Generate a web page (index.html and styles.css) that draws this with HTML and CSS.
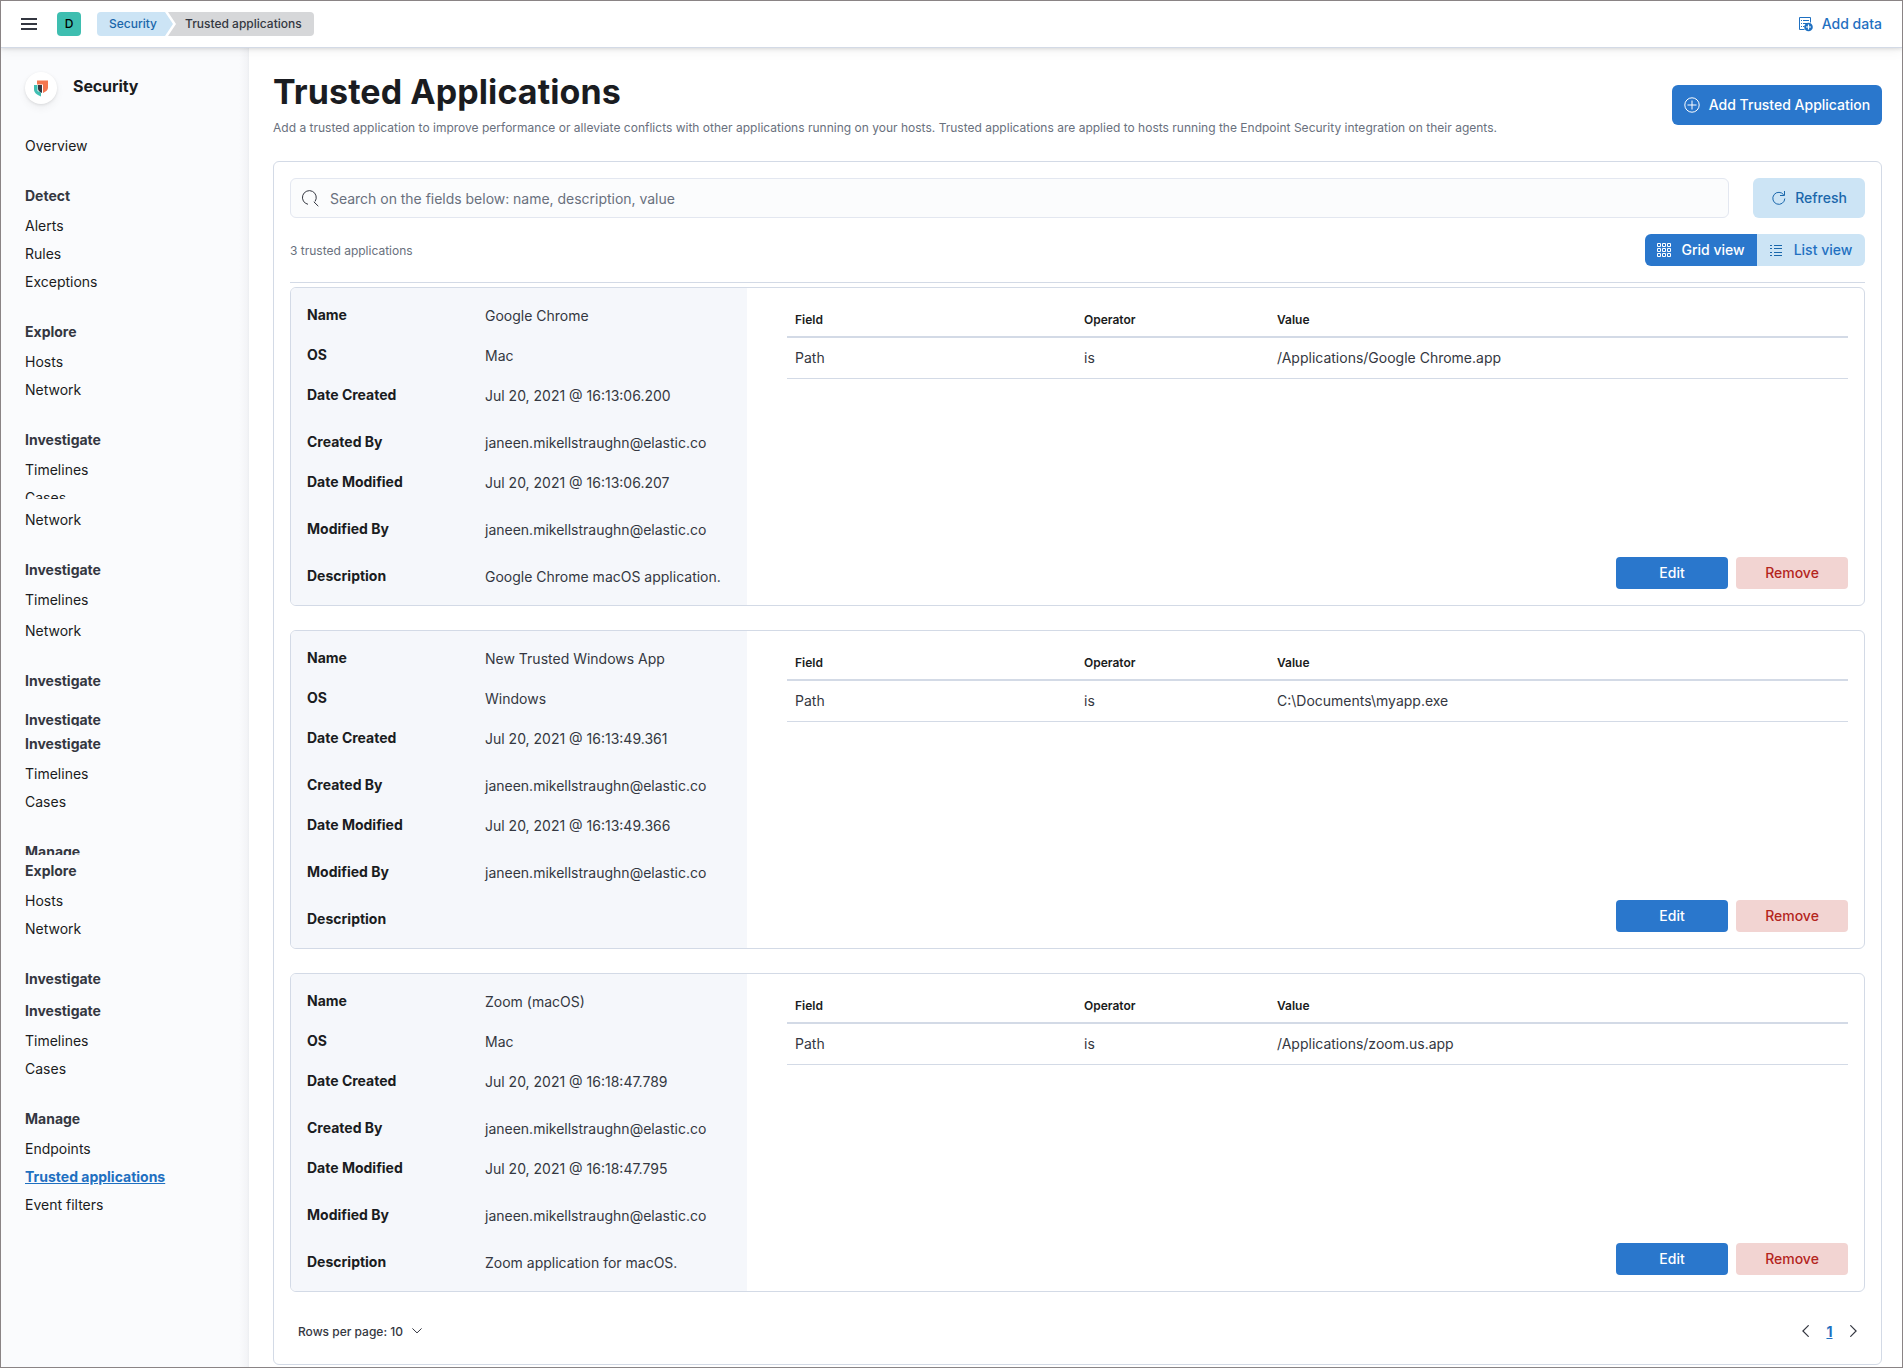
FILE: index.html
```html
<!DOCTYPE html>
<html lang="en">
<head>
<meta charset="utf-8">
<title>Trusted applications - Security</title>
<link rel="stylesheet" href="styles.css">
</head>
<body>
<div class="app">
  <header class="topbar">
    <button class="menu" aria-label="Menu"><svg width="16" height="12" viewBox="0 0 16 12"><path fill="#343741" d="M0 0h16v2H0zM0 5h16v2H0zM0 10h16v2H0z"/></svg></button>
    <span class="avatar">D</span>
    <nav class="crumbs">
      <a class="crumb crumb-link">Security</a>
      <span class="crumb crumb-current">Trusted applications</span>
    </nav>
    <a class="add-data">
      <svg width="15" height="15" viewBox="0 0 15 15"><path fill="none" stroke="#1f70c1" d="M6.500 12.500h-5v-12h11v5"/><path stroke="#1f70c1" d="M3 3.500h1M5 3.500h6M3 6.500h1M5 6.500h4M3 9.500h1M5 9.500h1.500"/><circle cx="10.500" cy="10" r="4.300" fill="#1f70c1"/><path stroke="#fff" stroke-width="1.200" d="M10.500 7.500v5M8 10h5"/></svg>
      <span>Add data</span>
    </a>
  </header>
  <div class="body">
    <aside class="sidebar">
      <div class="solution">
        <span class="logo"><svg width="14" height="17" viewBox="0 0 14 17"><path fill="#f4764f" d="M3 .5h11v7.300c0 2.300-1.800 3.800-5 5.200V4.500H3z"/><path fill="#41bfb3" d="M0 5h3.500v6l3.500 1.500V16.500C2.500 14.500 0 12.500 0 9.500z"/><path fill="#343741" d="M4 5h4v8C5 11.500 4 10.500 4 8.500z"/></svg></span>
        <span class="solution-name">Security</span>
      </div>
      <nav class="nav">
        <a class="link">Overview</a>
        <div class="head">Detect</div>
        <a class="link">Alerts</a>
        <a class="link">Rules</a>
        <a class="link">Exceptions</a>
        <div class="head">Explore</div>
        <a class="link">Hosts</a>
        <a class="link">Network</a>
        <div class="head">Investigate</div>
        <a class="link">Timelines</a>
        <a class="link cut-link">Cases</a>
        <a class="link after-cut">Network</a>
        <div class="head">Investigate</div>
        <a class="link">Timelines</a>
        <a class="link nudge">Network</a>
        <div class="head">Investigate</div>
        <div class="head cut-head">Investigate</div>
        <div class="head after-cut-head">Investigate</div>
        <a class="link">Timelines</a>
        <a class="link">Cases</a>
        <div class="head cut-head-short">Manage</div>
        <div class="head flush">Explore</div>
        <a class="link">Hosts</a>
        <a class="link">Network</a>
        <div class="head">Investigate</div>
        <div class="head flush">Investigate</div>
        <a class="link">Timelines</a>
        <a class="link">Cases</a>
        <div class="head">Manage</div>
        <a class="link">Endpoints</a>
        <a class="link link-active">Trusted applications</a>
        <a class="link">Event filters</a>
      </nav>
    </aside>
    <main class="main">
      <div class="page-head">
        <div>
          <h1>Trusted Applications</h1>
          <p class="subtitle">Add a trusted application to improve performance or alleviate conflicts with other applications running on your hosts. Trusted applications are applied to hosts running the Endpoint Security integration on their agents.</p>
        </div>
        <button class="btn btn-add">
          <svg width="16" height="16" viewBox="0 0 16 16"><circle cx="8" cy="8" r="7.200" fill="none" stroke="#fff"/><path stroke="#fff" d="M8 3.500v9M3.500 8h9"/></svg>
          <span>Add Trusted Application</span>
        </button>
      </div>
      <section class="panel">
        <div class="search-row">
          <div class="search">
            <svg width="17" height="17" viewBox="0 0 17 17"><path fill="none" stroke="#343741" d="M6 14.300A6.900 6.900 0 1 1 13 11.500M11.800 11.800l4.500 4.400"/></svg>
            <span>Search on the fields below: name, description, value</span>
          </div>
          <button class="btn btn-refresh">
            <svg width="14" height="14" viewBox="0 0 14 14"><path fill="none" stroke="#1a67ab" d="M11.800 4A6 6 0 1 0 12.800 7.500M12.500 0v4.500h-4.500"/></svg>
            <span>Refresh</span>
          </button>
        </div>
        <div class="tools">
          <span class="count">3 trusted applications</span>
          <div class="toggle">
            <button class="btn view view-on">
              <svg width="14" height="14" viewBox="0 0 14 14"><path fill="none" stroke="#fff" d="M.5.5h3v3h-3zM5.500.5h3v3h-3zM10.500.5h3v3h-3zM.5 5.500h3v3h-3zM5.500 5.500h3v3h-3zM10.500 5.500h3v3h-3zM.5 10.500h3v3h-3zM5.500 10.500h3v3h-3zM10.500 10.500h3v3h-3z"/></svg>
              <span>Grid view</span>
            </button>
            <button class="btn view view-off">
              <svg width="12" height="11" viewBox="0 0 12 11"><path stroke="#1a67ab" d="M0 .5h2M4 .5h8M0 3.500h2M4 3.500h8M0 7.500h2M4 7.500h8M0 10.500h2M4 10.500h8"/></svg>
              <span>List view</span>
            </button>
          </div>
        </div>
        <div class="cards">
          <article class="card">
            <dl class="facts">
              <dt>Name</dt><dd>Google Chrome</dd>
              <dt>OS</dt><dd>Mac</dd>
              <dt>Date Created</dt><dd>Jul 20, 2021 @ 16:13:06.200</dd>
              <dt>Created By</dt><dd>janeen.mikellstraughn@elastic.co</dd>
              <dt>Date Modified</dt><dd>Jul 20, 2021 @ 16:13:06.207</dd>
              <dt>Modified By</dt><dd>janeen.mikellstraughn@elastic.co</dd>
              <dt>Description</dt><dd>Google Chrome macOS application.</dd>
            </dl>
            <div class="detail">
              <table class="conditions">
                <thead><tr><th class="c-field">Field</th><th class="c-op">Operator</th><th>Value</th></tr></thead>
                <tbody><tr><td>Path</td><td>is</td><td>/Applications/Google Chrome.app</td></tr></tbody>
              </table>
              <div class="actions"><button class="btn btn-edit"><span>Edit</span></button><button class="btn btn-remove"><span>Remove</span></button></div>
            </div>
          </article>
          <article class="card">
            <dl class="facts">
              <dt>Name</dt><dd>New Trusted Windows App</dd>
              <dt>OS</dt><dd>Windows</dd>
              <dt>Date Created</dt><dd>Jul 20, 2021 @ 16:13:49.361</dd>
              <dt>Created By</dt><dd>janeen.mikellstraughn@elastic.co</dd>
              <dt>Date Modified</dt><dd>Jul 20, 2021 @ 16:13:49.366</dd>
              <dt>Modified By</dt><dd>janeen.mikellstraughn@elastic.co</dd>
              <dt>Description</dt><dd></dd>
            </dl>
            <div class="detail">
              <table class="conditions">
                <thead><tr><th class="c-field">Field</th><th class="c-op">Operator</th><th>Value</th></tr></thead>
                <tbody><tr><td>Path</td><td>is</td><td>C:\Documents\myapp.exe</td></tr></tbody>
              </table>
              <div class="actions"><button class="btn btn-edit"><span>Edit</span></button><button class="btn btn-remove"><span>Remove</span></button></div>
            </div>
          </article>
          <article class="card">
            <dl class="facts">
              <dt>Name</dt><dd>Zoom (macOS)</dd>
              <dt>OS</dt><dd>Mac</dd>
              <dt>Date Created</dt><dd>Jul 20, 2021 @ 16:18:47.789</dd>
              <dt>Created By</dt><dd>janeen.mikellstraughn@elastic.co</dd>
              <dt>Date Modified</dt><dd>Jul 20, 2021 @ 16:18:47.795</dd>
              <dt>Modified By</dt><dd>janeen.mikellstraughn@elastic.co</dd>
              <dt>Description</dt><dd>Zoom application for macOS.</dd>
            </dl>
            <div class="detail">
              <table class="conditions">
                <thead><tr><th class="c-field">Field</th><th class="c-op">Operator</th><th>Value</th></tr></thead>
                <tbody><tr><td>Path</td><td>is</td><td>/Applications/zoom.us.app</td></tr></tbody>
              </table>
              <div class="actions"><button class="btn btn-edit"><span>Edit</span></button><button class="btn btn-remove"><span>Remove</span></button></div>
            </div>
          </article>
        </div>
        <footer class="pager">
          <span class="rows">Rows per page: 10 <svg width="10" height="6" viewBox="0 0 10 6"><path fill="none" stroke="#343741" stroke-linecap="round" stroke-linejoin="round" d="M.7.7 5 4.900 9.300.7"/></svg></span>
          <span class="pages">
            <svg width="7" height="12" viewBox="0 0 7 12"><path fill="none" stroke="#343741" stroke-width="1.200" stroke-linecap="round" d="M6.300.6.900 6l5.400 5.400"/></svg>
            <a class="page">1</a>
            <svg width="7" height="12" viewBox="0 0 7 12"><path fill="none" stroke="#343741" stroke-width="1.200" stroke-linecap="round" d="M.7.6 6.100 6 .7 11.400"/></svg>
          </span>
        </footer>
      </section>
    </main>
  </div>
</div>
</body>
</html>
```
FILE: styles.css
```css
* { box-sizing: border-box; }

body {
  margin: 0;
  font-family: Inter, "Liberation Sans", sans-serif;
  font-size: 14px;
  color: #343741;
  background: #fff;
}

h1, p, dl, dd { margin: 0; }
svg { display: block; flex: none; }

button {
  padding: 0;
  border: 0;
  background: none;
  font: inherit;
}

.app {
  display: flex;
  flex-direction: column;
  height: 1368px;
  border: 1px solid #8a8485;
  overflow: hidden;
}

/* Top bar */
.topbar {
  display: flex;
  align-items: center;
  height: 47px;
  flex: none;
  padding: 0 20px;
  border-bottom: 1px solid #d3dae6;
  background: #fff;
  box-shadow: 0 1px 4px rgba(0, 0, 0, .13), 0 3px 12px rgba(0, 0, 0, .05);
  z-index: 2;
}

.avatar {
  width: 24px;
  height: 24px;
  margin-left: 20px;
  border-radius: 4px;
  background: #3ebeb0;
  color: #000;
  font-size: 12px;
  font-weight: 500;
  line-height: 24px;
  text-align: center;
}

.crumbs {
  display: flex;
  margin-left: 16px;
  font-size: 12px;
  font-weight: 500;
  line-height: 24px;
}

.crumb { height: 24px; }

.crumb-link {
  width: 76px;
  padding-left: 12px;
  border-radius: 4px 0 0 4px;
  background: #cce4f5;
  color: #1a67ab;
  clip-path: polygon(0 0, 68px 0, 100% 50%, 68px 100%, 0 100%);
}

.crumb-current {
  width: 146px;
  margin-left: -5px;
  padding-left: 17px;
  border-radius: 0 4px 4px 0;
  background: #d6d7d9;
  clip-path: polygon(0 0, 100% 0, 100% 100%, 0 100%, 8px 50%);
}

.add-data {
  display: flex;
  align-items: center;
  gap: 9px;
  margin-left: auto;
  color: #1f70c1;
  font-weight: 500;
}

.add-data span { padding-bottom: 1px; }
.add-data svg { margin-top: 1px; }

.body {
  display: flex;
  flex: 1;
  min-height: 0;
}

/* Sidebar */
.sidebar {
  width: 248px;
  flex: none;
  padding: 24px 24px 0;
  background: linear-gradient(to right, #fafbfd 238px, #f3f4f7 246px, #eceef1);
}

.solution {
  display: flex;
  align-items: center;
  gap: 16px;
  height: 32px;
  margin-bottom: 28px;
}

.logo {
  display: flex;
  align-items: center;
  justify-content: center;
  width: 32px;
  height: 32px;
  border-radius: 50%;
  background: #fff;
  box-shadow: 0 1px 3px rgba(0, 0, 0, .1), 0 4px 8px rgba(0, 0, 0, .05);
}

.solution-name {
  padding-bottom: 5px;
  color: #1a1c21;
  font-size: 16px;
  font-weight: 700;
  letter-spacing: -.1px;
}

.link, .head {
  display: block;
  color: #1a1c21;
  overflow: hidden;
}

.link { height: 28px; line-height: 28px; }

.head {
  height: 32px;
  margin-top: 20px;
  color: #343741;
  font-weight: 700;
  line-height: 32px;
}

.link-active {
  color: #1f70c1;
  font-weight: 700;
  text-decoration: underline;
}

.cut-link { height: 15px; }
.after-cut { margin-top: 7px; }
.nudge { margin-top: 3px; }
.cut-head { height: 22px; margin-top: 7px; }
.after-cut-head { margin-top: 2px; }
.cut-head-short { height: 19px; }
.flush { margin-top: 0; }

/* Main column */
.main {
  display: flex;
  flex-direction: column;
  flex: 1;
  min-width: 0;
  padding: 24px 20px 0 24px;
}

.page-head {
  display: flex;
  justify-content: space-between;
  height: 89px;
}

h1 {
  color: #1a1c21;
  font-size: 34px;
  font-weight: 700;
  letter-spacing: .08px;
  line-height: 40px;
}

.subtitle {
  margin-top: 7px;
  color: #69707d;
  font-size: 12px;
  letter-spacing: .01px;
  line-height: 18px;
  white-space: nowrap;
}

.btn {
  display: flex;
  align-items: center;
  justify-content: center;
  border-radius: 6px;
  font-weight: 500;
}

.btn span { padding-bottom: 2px; }

.btn-add {
  gap: 9px;
  width: 210px;
  height: 40px;
  margin-top: 13px;
  flex: none;
  background: #2a77cc;
  color: #fff;
  white-space: nowrap;
}

.panel {
  height: 1204px;
  padding: 16px;
  border: 1px solid #d3dae6;
  border-radius: 6px;
  background: #fff;
}

.search-row {
  display: flex;
  gap: 24px;
  height: 40px;
}

.search {
  display: flex;
  align-items: center;
  gap: 11px;
  flex: 1;
  padding-left: 11px;
  border: 1px solid #e3e7f0;
  border-radius: 6px;
  background: #fbfcfd;
  color: #69707d;
}

.search span { letter-spacing: -.02px; }

.btn-refresh {
  gap: 9px;
  padding-left: 1px;
  width: 112px;
  height: 40px;
  background: #cce4f5;
  color: #1a67ab;
}

.tools {
  display: flex;
  align-items: center;
  justify-content: space-between;
  height: 65px;
  border-bottom: 1px solid #d3dae6;
}

.count { color: #69707d; font-size: 12px; }

.toggle { display: flex; }
.view { height: 32px; border-radius: 0; }

.view-on {
  gap: 10px;
  width: 112px;
  border-radius: 6px 0 0 6px;
  background: #2a77cc;
  color: #fff;
}

.view-off {
  gap: 12px;
  width: 108px;
  border-radius: 0 6px 6px 0;
  background: #cce4f5;
  color: #1f70c1;
}

/* Application cards */
.cards {
  display: flex;
  flex-direction: column;
  gap: 24px;
  margin-top: 4px;
}

.card {
  display: flex;
  height: 319px;
  border: 1px solid #d3dae6;
  border-radius: 6px;
  overflow: hidden;
}

.facts {
  display: grid;
  grid-template-columns: 178px 1fr;
  grid-template-rows: 40px 40px 47px 40px 47px 47px 24px;
  width: 456px;
  flex: none;
  padding: 15px 0 0 16px;
  background: #f5f7fb;
  line-height: 24px;
}

.facts dt { color: #1a1c21; font-weight: 700; }
.facts dd { padding-top: 1px; }

.detail {
  display: flex;
  flex-direction: column;
  justify-content: space-between;
  flex: 1;
  padding: 16px 16px 16px 40px;
}

.conditions {
  width: 100%;
  border-collapse: separate;
  border-spacing: 0;
  table-layout: fixed;
}

.conditions th {
  height: 34px;
  padding: 0 8px 2px;
  border-bottom: 2px solid #d3dae6;
  color: #1a1c21;
  font-size: 12px;
  font-weight: 600;
  text-align: left;
}

.conditions td {
  height: 41px;
  padding: 0 8px 2px;
  border-bottom: 1px solid #d3dae6;
}

.c-field { width: 289px; }
.c-op { width: 193px; }

.actions {
  display: flex;
  justify-content: flex-end;
  gap: 8px;
}

.btn-edit, .btn-remove {
  width: 112px;
  height: 32px;
  border-radius: 4px;
}

.btn-edit { background: #2a77cc; color: #fff; }
.btn-remove { background: #f2d4d2; color: #b4251d; }

/* Pagination */
.pager {
  display: flex;
  align-items: center;
  justify-content: space-between;
  height: 38px;
  margin-top: 20px;
  padding: 0 8px;
  font-size: 12px;
  font-weight: 500;
}

.rows, .pages { display: flex; align-items: center; }
.rows { gap: 9px; }
.pages { gap: 16px; }

.page {
  width: 9px;
  text-align: center;
  color: #1f70c1;
  font-size: 14px;
  font-weight: 700;
  text-decoration: underline;
}
```
